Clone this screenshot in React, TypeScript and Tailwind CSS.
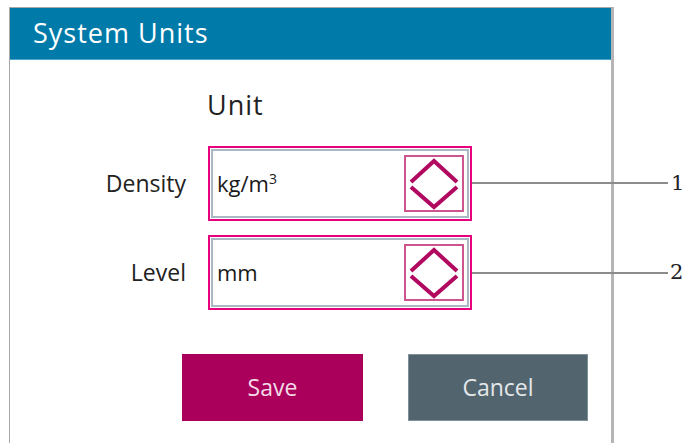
import React from 'react';

const uiFont = { fontFamily: '"Open Sans", "Noto Sans", sans-serif' };
const serifFont = { fontFamily: '"DejaVu Serif", serif' };

function Spinner() {
  return (
    <div className="w-[60px] h-[57px] border-2 border-[#cc5590] flex items-center justify-center">
      <svg width="52" height="52" viewBox="0 0 52 52">
        <path d="M3 24 L26 3 L49 24" fill="none" stroke="#b0095f" strokeWidth="4" />
        <path d="M3 29 L26 49 L49 29" fill="none" stroke="#b0095f" strokeWidth="4" />
      </svg>
    </div>
  );
}

function UnitField({ label, value }: { label: React.ReactNode; value: React.ReactNode }) {
  return (
    <div className="flex items-center">
      <div className="w-[177px] pr-[1px] text-right text-[23px] text-[#222]">{label}</div>
      <div className="ml-[21px] w-[264px] h-[75px] border-2 border-[#e6007e] p-[1px]">
        <div className="h-full border-2 border-[#a9b8c2] flex items-center justify-between pl-[4px] pr-[3px]">
          <span className="text-[22px] text-[#1a1a1a]">{value}</span>
          <Spinner />
        </div>
      </div>
    </div>
  );
}

export default function App() {
  return (
    <div className="relative w-[686px] h-[443px] bg-white overflow-hidden" style={uiFont}>
      <div className="ml-[9px] mt-[7px] w-[605px] h-[436px] border-l border-t border-[#a8a8a8] border-r-[3px] border-r-[#b5b5b5]">
        {/* Header */}
        <div className="h-[52px] bg-[#007aa9] flex items-center pl-[23px] border-b border-[#4fa3c7]">
          <span className="text-[27px] text-white tracking-[1px]">System Units</span>
        </div>

        {/* Body */}
        <div className="pt-[27px]">
          <div className="pl-[197px] text-[27px] text-[#222] leading-[36px] tracking-[1px]">Unit</div>
          <div className="mt-[23px] flex flex-col gap-[14px]">
            <UnitField
              label="Density"
              value={
                <>
                  kg/m<span className="text-[14px] align-[8px]">3</span>
                </>
              }
            />
            <UnitField label="Level" value="mm" />
          </div>
          <div className="mt-[44px] flex pl-[172px] gap-[45px]">
            <button className="w-[181px] h-[67px] bg-[#aa005b] text-[#f3dbe6] text-[23px] flex items-center justify-center">
              Save
            </button>
            <button className="w-[180px] h-[67px] bg-[#52656f] border border-[#7f9099] text-[#e4e8ea] text-[23px] flex items-center justify-center">
              Cancel
            </button>
          </div>
        </div>
      </div>

      {/* Callouts */}
      <div className="absolute left-[472px] top-[182px] w-[196px] h-[2px] bg-[#8c8c8c]" />
      <div className="absolute left-[472px] top-[272px] w-[196px] h-[2px] bg-[#8c8c8c]" />
      <span className="absolute left-[671px] top-[170px] text-[21px] leading-[26px] text-[#222]" style={serifFont}>1</span>
      <span className="absolute left-[670px] top-[259px] text-[21px] leading-[26px] text-[#222]" style={serifFont}>2</span>
    </div>
  );
}
